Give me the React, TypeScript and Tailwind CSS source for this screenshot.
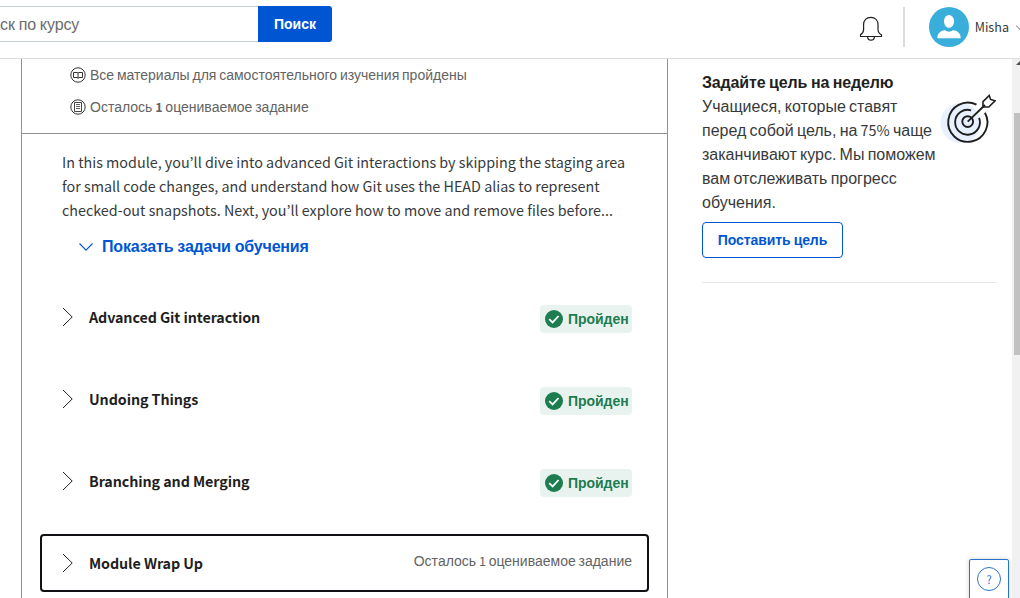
import React from "react";

const latin = "font-['Noto_Sans_CJK_KR',sans-serif]";

function Chevron({ className = "" }: { className?: string }) {
  return (
    <svg className={className} width="12" height="20" viewBox="0 0 12 20" fill="none" stroke="#1f1f1f" strokeWidth="1">
      <path d="M1 1 L10.2 10 L1 19" />
    </svg>
  );
}

function Passed() {
  return (
    <span className="mt-1 flex h-7 w-[92px] items-center rounded-[4px] bg-[#e8f3ef] pl-[5px]">
      <svg width="18" height="18" viewBox="0 0 18 18">
        <circle cx="9" cy="9" r="9" fill="#1d7c50" />
        <path d="M4.2 9.2 L7.6 12.4 L13.6 6" fill="none" stroke="#fff" strokeWidth="1.8" />
      </svg>
      <span className="ml-[5px] text-[14px] leading-5 font-bold tracking-[-0.05px] whitespace-nowrap text-[#1d7c50]">Пройден</span>
    </span>
  );
}

function Lesson({ title, focused = false, children }: { title: string; focused?: boolean; children: React.ReactNode }) {
  return (
    <div
      className={
        focused
          ? "flex h-[58px] items-center rounded-[4px] border-2 border-[#0f1114] pr-[15px] pl-5"
          : "flex h-[58px] items-center border-2 border-transparent pr-[15px] pl-5"
      }
    >
      <Chevron />
      <span className={`ml-[15px] flex-1 text-[14.3px] leading-6 font-bold tracking-[-0.09px] whitespace-nowrap text-[#1f1f1f] ${latin}`}>{title}</span>
      {children}
    </div>
  );
}

function Header() {
  return (
    <header className="flex h-[59px] shrink-0 items-start border-b border-[#dadce0]">
      <div className="mt-[6px] flex h-9 w-[258px] items-center border-y border-[#c6cdd3]">
        <span className="mt-[2px] text-[16px] leading-6 tracking-[-0.1px] whitespace-nowrap text-[#6b6b6b] [word-spacing:-0.5px]">ск по курсу</span>
      </div>
      <div className="mt-[6px] flex h-9 w-[74px] items-center justify-center rounded-r-[3px] bg-[#0056d2] text-[14px] font-bold text-white">Поиск</div>
      <div className="flex-1" />
      <svg className="mt-[16px]" width="24" height="26" viewBox="0 0 24 26" fill="none" stroke="#1f1f1f" strokeWidth="1.2" strokeLinejoin="round">
        <path d="M1.5 20.5 V18.8 C3.4 17.6 4.6 15.8 4.6 13.4 V8.6 C4.6 4.2 7.4 1.3 11.8 1.3 C16.2 1.3 19 4.2 19 8.6 V13.4 C19 15.8 20.4 17.6 22.5 18.8 V20.5 Z" />
        <path d="M8.6 20.5 C8.6 22.9 9.8 24.2 12 24.2 C14.2 24.2 15.4 22.9 15.4 20.5" />
      </svg>
      <div className="mt-[7px] ml-5 h-10 w-[2px] bg-[#dcdcdc]" />
      <svg className="mt-[7px] ml-6" width="40" height="40" viewBox="0 0 40 40">
        <circle cx="20" cy="20" r="20" fill="#3aaeda" />
        <ellipse cx="20" cy="14.4" rx="5" ry="6.4" fill="#fff" />
        <path d="M8.4 31.3 C8.4 26.5 11 24 16 23.3 C18.5 25.2 21.5 25.2 24 23.3 C29 24 31.7 26.5 31.7 31.3 Z" fill="#fff" />
      </svg>
      <span className={`mt-[17px] ml-[6px] text-[12.6px] leading-5 text-[#373a3c] ${latin}`}>Misha</span>
      <svg className="mt-6 ml-[7px] w-1" width="4" height="8" viewBox="0 0 4 8" fill="none" stroke="#666" strokeWidth="1">
        <path d="M0 1.5 L5 6.5" />
      </svg>
    </header>
  );
}

function ModuleCard() {
  return (
    <section className="ml-[21px] flex w-[647px] flex-col border-x border-[#8f9194]">
      <div className="flex h-[75px] flex-col gap-2 border-b border-[#8f9194] pt-1 pl-12 text-[14px] text-[#636363] [word-spacing:-1.1px]">
        <div className="flex h-6 items-center gap-[4px] whitespace-nowrap">
          <svg width="16" height="16" viewBox="0 0 16 16" fill="none" stroke="#333" strokeWidth="1">
            <circle cx="8" cy="8" r="7.2" />
            <path d="M3.5 5.5 H7 L8 6 L9 5.5 H12.5 V10.5 H9 L8 11.3 L7 10.5 H3.5 Z M8 6 V11.3" />
          </svg>
          <span>Все материалы для самостоятельного изучения пройдены</span>
        </div>
        <div className="flex h-6 items-center gap-[4px] whitespace-nowrap">
          <svg width="16" height="16" viewBox="0 0 16 16" fill="none" stroke="#333" strokeWidth="1">
            <circle cx="8" cy="8" r="7.2" />
            <path d="M4.5 3.5 H11.5 V12.5 H4.5 Z" strokeWidth="0.9" />
            <path d="M6 5.5 H10 M6 7.5 H10 M6 9.5 H10" strokeWidth="0.8" />
          </svg>
          <span>
            Осталось <b className={`text-[12.6px] leading-5 ${latin}`}>1</b> оцениваемое задание
          </span>
        </div>
      </div>
      <p className={`h-[88px] pt-4 pl-10 text-[14.33px] leading-6 whitespace-nowrap text-[#373a3c] ${latin}`}>
        In this module, you’ll dive into advanced Git interactions by skipping the staging area
        <br />
        for small code changes, and understand how Git uses the HEAD alias to represent
        <br />
        checked-out snapshots. Next, you’ll explore how to move and remove files before...
      </p>
      <div className="mt-[13px] flex h-6 items-center pl-[57px] text-[#0056d2]">
        <svg width="14" height="9" viewBox="0 0 14 9" fill="none" stroke="currentColor" strokeWidth="1.1">
          <path d="M0.5 0.5 L7 7.1 L13.5 0.5" />
        </svg>
        <span className="ml-[9px] text-[16px] font-bold tracking-[-0.17px] whitespace-nowrap [word-spacing:-0.3px]">Показать задачи обучения</span>
      </div>
      <div className="mt-[29px] flex flex-col gap-6 px-[18px]">
        <Lesson title="Advanced Git interaction"><Passed /></Lesson>
        <Lesson title="Undoing Things"><Passed /></Lesson>
        <Lesson title="Branching and Merging"><Passed /></Lesson>
        <Lesson title="Module Wrap Up" focused>
          <span className="mb-1 text-[14px] leading-5 whitespace-nowrap text-[#636363] [word-spacing:-1.1px]">
            Осталось <span className={`text-[12.6px] ${latin}`}>1</span> оцениваемое задание
          </span>
        </Lesson>
      </div>
    </section>
  );
}

function Goal() {
  return (
    <aside className="ml-[34px] h-[224px] w-[294px] border-b border-[#e5e7e8] pt-[12px]">
      <div className="flex">
        <div className="w-[240px] text-[16px] leading-6 whitespace-nowrap text-[#373a3c] [word-spacing:-1.2px]">
          <h2 className="font-bold tracking-[-0.16px] text-[#1f1f1f] [word-spacing:-0.6px]">Задайте цель на неделю</h2>
          <p>
            Учащиеся, которые ставят
            <br />
            перед собой цель, на <span className={`text-[14.3px] leading-5 ${latin}`}>75%</span> чаще
            <br />
            заканчивают курс. Мы поможем
            <br />
            вам отслеживать прогресс
            <br />
            обучения.
          </p>
        </div>
        <svg className="mt-[22px] -ml-px shrink-0" width="56" height="54" viewBox="-2 0 56 54" fill="none" stroke="#1f1f1f" strokeWidth="1.9">
          <circle cx="18.5" cy="30" r="20" fill="#e8f1ff" stroke="none" />
          <path d="M34.5 11.7 A19.6 19.6 0 1 0 42.9 19.7" />
          <path d="M29.1 17.4 A12.4 12.4 0 1 0 37.1 24.8" />
          <circle cx="25.7" cy="28.6" r="5.4" />
          <path d="M25.7 28.6 L43 12" />
          <path d="M41 14 V8.6 L47.2 2.4 L48.6 6.4 L53 7.8 L46.8 14 Z" strokeWidth="1.6" />
        </svg>
      </div>
      <button className="mt-[7px] h-9 w-[141px] rounded-[4px] border border-[#0056d2] text-[14px] font-bold tracking-[-0.1px] whitespace-nowrap text-[#0056d2] [word-spacing:-0.6px]">
        Поставить цель
      </button>
    </aside>
  );
}

export default function App() {
  return (
    <div className="relative flex h-[598px] w-[1020px] flex-col overflow-hidden bg-white font-['Liberation_Sans',Arial,sans-serif]">
      <Header />
      <main className="flex min-h-0 flex-1">
        <ModuleCard />
        <Goal />
        <div className="ml-auto flex w-2 flex-col items-end bg-[#f1f1f1]">
          <svg className="mt-[2px]" width="4" height="4" viewBox="0 0 4 4">
            <path d="M0 4 L4 0 V4 Z" fill="#505050" />
          </svg>
          <div className="mt-[48px] h-[242px] w-[6px] bg-[#c1c1c1]" />
        </div>
      </main>
      <div className="absolute top-[559px] left-[969px] flex h-[42px] w-10 justify-center rounded-[2px] border border-[#2a73cc] bg-white pt-[7px] shadow-[0_0_4px_rgba(0,0,0,0.2)]">
        <div className={`flex size-6 items-center justify-center rounded-full border border-[#2a73cc] text-[11px] text-[#2a73cc] ${latin}`}>?</div>
      </div>
    </div>
  );
}
